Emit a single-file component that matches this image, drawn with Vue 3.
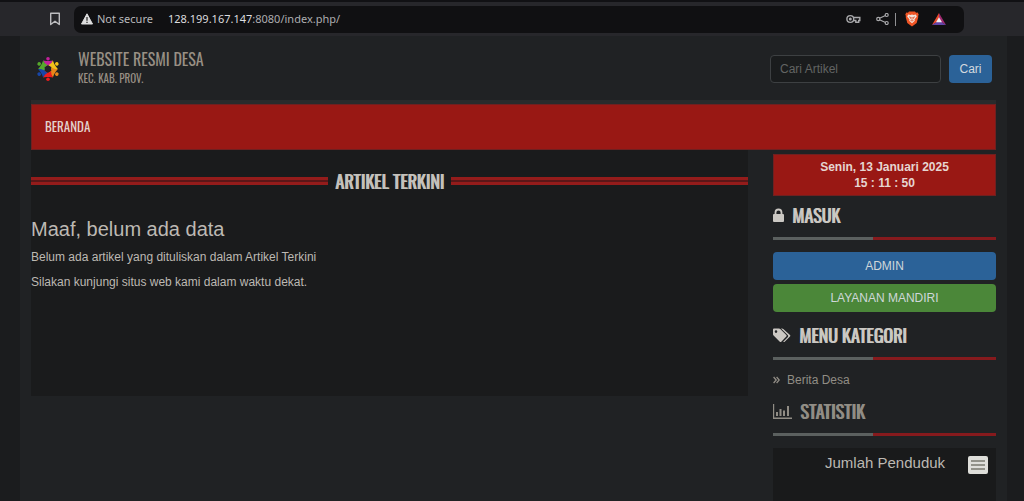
<script setup>
const people = [
  { angle: 0, color: '#c2209a' },
  { angle: 60, color: '#f2c21a' },
  { angle: 120, color: '#e8871a' },
  { angle: 180, color: '#ee1c1c' },
  { angle: 240, color: '#1746a8' },
  { angle: 300, color: '#55a82c' }
]
</script>

<template>
  <div class="window">
    <header class="browser">
      <button class="icon-btn bookmark" aria-label="Bookmark">
        <svg width="12" height="14" viewBox="0 0 12 14"><path d="M1.7 1.2h8.6v11.3L6 9.2l-4.3 3.3z" fill="none" stroke="#bdbdc0" stroke-width="1.4" stroke-linejoin="round" /></svg>
      </button>
      <div class="address">
        <svg width="12" height="12" viewBox="0 0 12 12"><path d="M6 .8 11.5 11H.5z" fill="#dededf" stroke="#dededf" stroke-linejoin="round" /><path d="M6 4v3.7M6 8.8v1.3" stroke="#222" stroke-width="1.2" /></svg>
        <span class="secure">Not secure</span>
        <span class="url">128.199.167.147<span class="path">:8080/index.php/</span></span>
        <svg class="key" width="15" height="10" viewBox="0 0 15 10" fill="none" stroke="#a9a9ac" stroke-width="1.4"><circle cx="4.3" cy="5" r="3.4" /><circle cx="4.3" cy="5" r=".8" /><path d="M7.5 3.5h6.3v3h-1.1v1.8H9.8V6.5H7.5" /></svg>
        <svg class="share" width="13" height="12" viewBox="0 0 13 12" fill="none" stroke="#a9a9ac" stroke-width="1.2"><path d="m3.5 5.3 6-2.8M3.5 6.7l6 2.8" /><circle cx="2.3" cy="6" r="1.6" /><circle cx="10.7" cy="2" r="1.5" /><circle cx="10.7" cy="10" r="1.5" /></svg>
        <span class="divider"></span>
        <svg class="lion" width="14" height="16" viewBox="0 0 14 16"><path d="M4 .5h6l1 1.2 1.7-.1 1 2-.6 1.5.2 1-1.6 6L7 15.6l-4.7-3.5-1.6-6 .2-1-.6-1.5 1-2L3 1.7z" fill="#f05525" /><path d="m3.2 3.5 2.3.4L7 3.4l1.5.5 2.3-.4 1 2-2.3 3 .3 1.2L7 12.2 4.2 9.7l.3-1.2-2.3-3z" fill="#f4e3dc" /><path d="m4 5.8 2 .8-.6 1.2M10 5.8l-2 .8.6 1.2M7 6v3.5M5.5 9.4 7 10l1.5-.6" fill="none" stroke="#e0562c" stroke-width=".8" /></svg>
        <svg class="bat" width="14" height="12" viewBox="0 0 14 12"><path d="M7 0 0 12l7-4.2z" fill="#e84a2c" /><path d="m7 0 7 12-7-4.2z" fill="#a02a70" /><path d="M0 12h14L7 7.5z" fill="#6245a8" /><path d="m7 4.3 3 5H4z" fill="#f4eef2" /></svg>
      </div>
    </header>

    <div class="page">
      <header class="masthead">
        <a class="brand" href="#">
          <svg class="logo" width="24" height="26" viewBox="-12 -13 24 26">
            <g v-for="p in people" :key="p.angle" :transform="`rotate(${p.angle})`" :fill="p.color">
              <circle cy="-10.2" r="1.8" />
              <path d="M-5-8.5-1.5-8h3L5-8.5 3.6-6 3-2.2 0-3.9l-3 1.7-.6-3.8z" />
            </g>
          </svg>
          <span class="brand-text">
            <span class="site">WEBSITE RESMI DESA</span>
            <span class="region">KEC. KAB. PROV.</span>
          </span>
        </a>
        <form class="search" @submit.prevent>
          <input type="text" placeholder="Cari Artikel" aria-label="Cari Artikel">
          <button type="submit">Cari</button>
        </form>
      </header>

      <nav class="menu"><a href="#">BERANDA</a></nav>

      <div class="columns">
        <main class="articles">
          <h2 class="ribbon"><span>ARTIKEL TERKINI</span></h2>
          <h3>Maaf, belum ada data</h3>
          <p>Belum ada artikel yang dituliskan dalam Artikel Terkini</p>
          <p>Silakan kunjungi situs web kami dalam waktu dekat.</p>
        </main>

        <aside>
          <div class="clock">Senin, 13 Januari 2025<br>15 : 11 : 50</div>

          <h2 class="side-title">
            <svg width="11" height="14" viewBox="0 0 11 14"><path d="M2.5 7V4.5a3 3 0 0 1 6 0V7" fill="none" stroke="currentColor" stroke-width="1.8" /><rect y="6" width="11" height="8" rx="1" fill="currentColor" /></svg>
            MASUK
          </h2>
          <a class="action blue" href="#">ADMIN</a>
          <a class="action green" href="#">LAYANAN MANDIRI</a>

          <h2 class="side-title">
            <svg width="18" height="15" viewBox="0 0 18 15" fill="currentColor"><path fill-rule="evenodd" d="M0 1.5Q0 .5 1 .5h5q.7 0 1.3.5l6 6q.8.8 0 1.5l-5 5.2q-.7.7-1.5 0L.6 7.5Q0 7 0 6.3zM3 2.3a1.3 1.3 0 1 0 0 2.6 1.3 1.3 0 0 0 0-2.6z" /><path d="M8 .5h1q.7 0 1.3.5l6.7 6q.8.8 0 1.5l-5.3 5.2q-.8.8-1.5 0l4.7-4.8q.7-.9 0-1.6z" /></svg>
            MENU KATEGORI
          </h2>
          <ul class="categories">
            <li>
              <svg width="7" height="8" viewBox="0 0 7 8"><path d="m.6 1 2.6 3L.6 7M3.6 1l2.6 3-2.6 3" fill="none" stroke="currentColor" stroke-width="1.3" /></svg>
              <a href="#">Berita Desa</a>
            </li>
          </ul>

          <h2 class="side-title muted">
            <svg width="19" height="15" viewBox="0 0 19 15" fill="currentColor"><path d="M0 0h1.2v13.5H19V15H0zM3 8h2v4H3zM6.5 5h2v7h-2zM10 6.5h2V12h-2zM14 2h2v10h-2z" /></svg>
            STATISTIK
          </h2>
          <section class="chart">
            <h3>Jumlah Penduduk</h3>
            <button aria-label="Chart menu">
              <svg width="14" height="12" viewBox="0 0 14 12"><path d="M0 2h14M0 6h14M0 10h14" stroke="#92928a" stroke-width="2" /></svg>
            </button>
          </section>
        </aside>
      </div>
    </div>
  </div>
</template>

<style>
body { background: #1b1c1e; }
</style>

<style scoped>
* { box-sizing: border-box; }
.window {
  height: 100vh;
  overflow: hidden;
  display: flex;
  flex-direction: column;
  color: #bdb9b3;
  font: 12px/16px "Liberation Sans", Arial, sans-serif;
}
a { color: inherit; text-decoration: none; }
h2, h3, p, ul { margin: 0; padding: 0; }
button { border: 0; padding: 0; font: inherit; cursor: pointer; }
svg { flex: none; display: block; }

.browser {
  flex: none;
  display: flex;
  align-items: center;
  height: 36px;
  padding: 0 60px 0 49px;
  border-top: 2px solid #111114;
  background: #27272b;
}
.icon-btn { background: none; margin-right: 13px; }
.address {
  flex: 1;
  display: flex;
  align-items: center;
  height: 27px;
  padding: 0 18px 0 7px;
  border-radius: 7px;
  background: #101012;
  color: #b9b9bc;
  font-family: "Noto Sans", sans-serif;
  font-size: 11px;
}
.secure { margin-left: 4px; }
.url { margin-left: 15px; color: #dcdcdf; }
.path { color: #adadb0; }
.key { margin-left: auto; }
.share { margin-left: 15px; }
.divider { width: 1px; height: 13px; margin: 0 9px 0 6px; background: #909093; }
.bat { margin-left: 13px; }

.page {
  flex: 1;
  margin: 0 17px 0 20px;
  padding: 0 11px;
  background: #202224;
}
.masthead {
  display: flex;
  align-items: center;
  justify-content: space-between;
  height: 68px;
  padding-top: 2px;
  border-bottom: 4px solid #2a2b2c;
}
.brand { display: flex; align-items: center; padding-left: 5px; }
.brand-text {
  display: flex;
  flex-direction: column;
  margin-left: 18px;
  padding-bottom: 2px;
  color: #989084;
  font-family: Oswald, "Liberation Sans Narrow", "Liberation Sans", sans-serif;
}
.site { font-size: 16px; line-height: 20px; }
.region { font-size: 11px; line-height: 18px; }
.search { display: flex; gap: 8px; padding-right: 4px; }
.search input {
  width: 171px;
  height: 28px;
  padding: 0 9px;
  border: 1px solid #3d4042;
  border-radius: 4px;
  background: #1a1c1d;
  color: #bdb9b3;
  font: inherit;
}
.search input::placeholder { color: #626463; opacity: 1; }
.search button {
  width: 43px;
  height: 28px;
  border-radius: 4px;
  background: #2b6298;
  color: #d3d9df;
}
.menu {
  display: flex;
  align-items: center;
  height: 46px;
  padding: 0 13px 2px;
  border: 1px solid #702020;
  background: #991814;
  color: #e3d2cd;
  font: 13px/20px Oswald, "Liberation Sans Narrow", "Liberation Sans", sans-serif;
}
.columns {
  display: grid;
  grid-template-columns: minmax(0, 1fr) 223px;
  align-items: start;
  gap: 25px;
}
.articles { min-height: 246px; padding-top: 17px; background: #1a1b1c; }
.ribbon {
  display: flex;
  align-items: center;
  gap: 7px;
  font: 18px/28px Oswald, "Liberation Sans Narrow", "Liberation Sans", sans-serif;
  color: #c4c1bc;
}
.ribbon span, .side-title { text-shadow: 1px 0 currentColor; }
.ribbon::before, .ribbon::after {
  content: "";
  flex: 1;
  height: 2px;
  border: solid #941c1b;
  border-width: 3px 0;
  background: #5b1718;
}
.articles h3 { margin: 21px 0 7px; font-size: 20px; font-weight: 400; line-height: 26px; }
.articles p { margin-bottom: 9px; }

.clock {
  margin-top: 4px;
  padding: 4px 0;
  border: 1px solid #702020;
  background: #991814;
  color: #e6d5d1;
  font-weight: bold;
  text-align: center;
}
.side-title {
  display: flex;
  align-items: center;
  gap: 8px;
  height: 44px;
  margin-bottom: 12px;
  padding-bottom: 3px;
  border-bottom: 3px solid;
  border-image: linear-gradient(90deg, #5b605f 45%, #861a1d 45%) 1;
  color: #cbc8c3;
  font: 18px/24px Oswald, "Liberation Sans Narrow", "Liberation Sans", sans-serif;
}
.muted { color: #918d85; }
.action {
  display: block;
  margin-bottom: 4px;
  padding: 6px 0;
  border-radius: 4px;
  color: #cfd7da;
  text-align: center;
}
.blue { background: #2b6298; }
.green { background: #4b8739; }
.categories { list-style: none; color: #918d85; }
.categories li { display: flex; align-items: center; gap: 7px; height: 20px; padding-bottom: 4px; }
.chart {
  display: flex;
  align-items: flex-start;
  min-height: 60px;
  padding: 8px 8px 0 52px;
  background: #191a1b;
}
.chart h3 { font-size: 15px; font-weight: 400; line-height: 14px; }
.chart button {
  display: grid;
  place-items: center;
  width: 20px;
  height: 18px;
  margin-left: auto;
  border-radius: 2px;
  background: #dededa;
}
</style>
